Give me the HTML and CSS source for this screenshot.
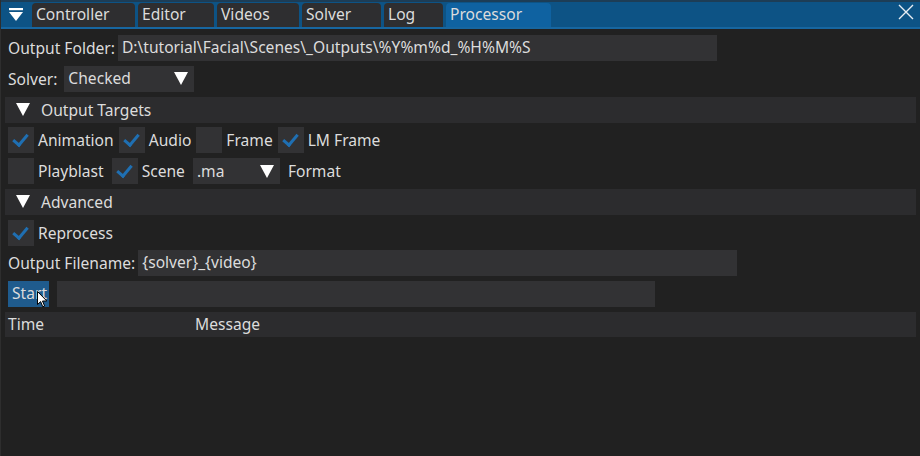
FILE: index.html
```html
<!DOCTYPE html>
<html>
<head>
<meta charset="utf-8">
<link rel="stylesheet" href="styles.css">
</head>
<body>
<div class="window">
  <div class="titlebar">
    <div class="menu-btn">
      <svg width="14" height="14" viewBox="0 0 14 14"><rect x="0" y="0" width="14" height="2.2" fill="#fff"/><polygon points="0,4 14,4 7,13" fill="#fff"/></svg>
    </div>
    <div class="tabs">
      <div class="tab">Controller</div>
      <div class="tab">Editor</div>
      <div class="tab">Videos</div>
      <div class="tab">Solver</div>
      <div class="tab">Log</div>
      <div class="tab active">Processor</div>
    </div>
    <div class="close">
      <svg width="16" height="16" viewBox="0 0 16 16"><path d="M1 1 L15 15 M15 1 L1 15" stroke="#e8eef4" stroke-width="1.4" fill="none"/></svg>
    </div>
  </div>
  <div class="content">
    <div class="row">
      <span class="label">Output Folder:</span>
      <div class="field w-folder">D:\tutorial\Facial\Scenes\_Outputs\%Y%m%d_%H%M%S</div>
    </div>
    <div class="row">
      <span class="label label-solver">Solver:</span>
      <div class="field combo w-solver"><span>Checked</span><span class="tri"></span></div>
    </div>
    <div class="header"><span class="tri hdr-tri"></span>Output Targets</div>
    <div class="row">
      <span class="cb on"></span><span class="cb-label">Animation</span>
      <span class="cb on"></span><span class="cb-label">Audio</span>
      <span class="cb"></span><span class="cb-label">Frame</span>
      <span class="cb on"></span><span class="cb-label">LM Frame</span>
    </div>
    <div class="row">
      <span class="cb"></span><span class="cb-label cb-label-wide">Playblast</span>
      <span class="cb on"></span><span class="cb-label cb-label-wide">Scene</span>
      <div class="field combo w-fmt"><span>.ma</span><span class="tri"></span></div>
      <span class="cb-label">Format</span>
    </div>
    <div class="header"><span class="tri hdr-tri"></span>Advanced</div>
    <div class="row">
      <span class="cb on"></span><span class="cb-label">Reprocess</span>
    </div>
    <div class="row">
      <span class="label">Output Filename:</span>
      <div class="field w-fname">{solver}_{video}</div>
    </div>
    <div class="row start-row">
      <div class="btn">Start
        <svg class="cursor" width="11" height="17" viewBox="0 0 11 17"><path d="M0.5 0.5 L0.5 13.5 L3.6 10.6 L5.8 15.8 L7.6 15 L5.5 10 L9.8 10 Z" fill="#fff" stroke="#000" stroke-width="1"/></svg>
      </div>
      <div class="progress"></div>
    </div>
    <div class="table-head">
      <span class="col-time">Time</span>
      <span class="col-msg">Message</span>
    </div>
  </div>
</div>
</body>
</html>
```
FILE: styles.css
```css
* { box-sizing: border-box; }
html, body {
  margin: 0;
  padding: 0;
  background: #222222;
  width: 920px;
  height: 456px;
  overflow: hidden;
}
body {
  font-family: "Noto Sans", "Open Sans", sans-serif;
  font-size: 15.6px;
  color: #dcdcdc;
}
.window {
  width: 920px;
  height: 456px;
  background: #212121;
  border-left: 1px solid #2e2e2e;
  display: flex;
  flex-direction: column;
}
.titlebar {
  height: 29px;
  background: #0d5385;
  border-top: 2px solid #1d3d56;
  border-bottom: 2px solid #1766a0;
  display: flex;
  align-items: flex-end;
  padding-left: 4px;
}
.menu-btn {
  width: 22px;
  height: 24px;
  display: flex;
  align-items: center;
  justify-content: center;
  margin-right: 5px;
}
.tabs {
  display: flex;
  gap: 3px;
  height: 24px;
  flex: 1;
}
.tab {
  background: #2e2e30;
  border-radius: 4px 4px 0 0;
  height: 24px;
  line-height: 23px;
  padding: 0 6px 0 4px;
  color: #dcdcdc;
}
.tab:nth-child(1) { width: 103px; }
.tab:nth-child(2) { width: 76px; }
.tab:nth-child(3) { width: 82px; }
.tab:nth-child(4) { width: 79px; }
.tab:nth-child(5) { width: 59px; }
.tab:nth-child(6) { width: 105px; }
.tab.active { background: #0f62a1; }
.close {
  width: 20px;
  height: 24px;
  display: flex;
  align-items: center;
  justify-content: center;
  margin-right: 4px;
  padding-bottom: 6px;
}
.content {
  padding: 6px 4px 0 4px;
  display: flex;
  flex-direction: column;
  gap: 4.75px;
}
.row {
  height: 26px;
  display: flex;
  align-items: center;
  padding-left: 3px;
  white-space: nowrap;
}
.label { margin-right: 3px; }
.label-solver { margin-right: 7px; }
.field {
  height: 26px;
  background: #323234;
  line-height: 25px;
  padding: 0 4px;
}
.w-folder { width: 599px; }
.w-solver { width: 130px; }
.w-fmt { width: 87px; margin-right: 4px; }
.w-fname { width: 599px; }
.combo {
  display: flex;
  justify-content: space-between;
  align-items: center;
  padding-right: 6px;
}
.tri {
  width: 0;
  height: 0;
  border-left: 7px solid transparent;
  border-right: 7px solid transparent;
  border-top: 13px solid #ffffff;
}
.header {
  height: 26px;
  background: #2c2c2e;
  display: flex;
  align-items: center;
  padding-left: 11px;
}
.hdr-tri { margin-right: 11px; }
.cb {
  width: 26px;
  height: 26px;
  background: #323234;
  flex: none;
  position: relative;
}
.cb.on::after {
  content: "";
  position: absolute;
  left: 8px;
  top: 4px;
  width: 6px;
  height: 12px;
  border-right: 3px solid #1f6fb2;
  border-bottom: 3px solid #1f6fb2;
  transform: rotate(40deg);
  transform-origin: 50% 50%;
}
.cb-label { margin: 0 5px 0 4px; }
.cb-label-wide { margin-right: 8px; }
.start-row { gap: 8px; }
.btn {
  height: 26px;
  width: 41px;
  background: #1f5b8d;
  line-height: 25px;
  padding-left: 4px;
  position: relative;
}
.cursor {
  position: absolute;
  left: 29px;
  top: 10px;
}
.progress {
  width: 598px;
  height: 26px;
  background: #323234;
}
.table-head {
  height: 25px;
  background: #2c2c2e;
  display: flex;
  align-items: center;
  padding-left: 3px;
}
.col-time { width: 187px; }
```
